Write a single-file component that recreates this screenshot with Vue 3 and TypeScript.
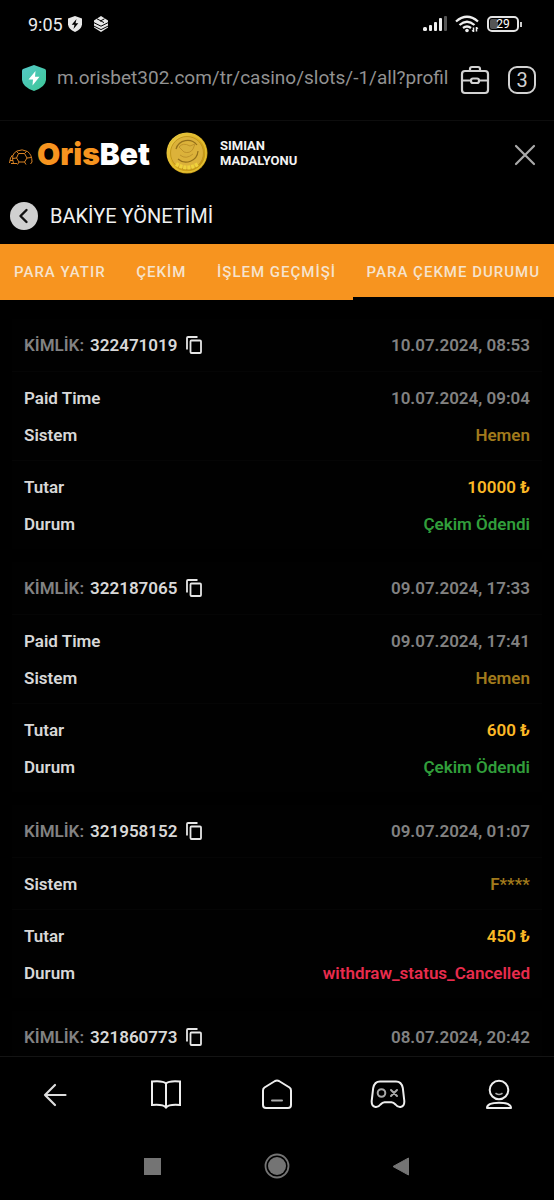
<script setup lang="ts">
import { ref } from 'vue'

interface Row {
  label: string
  value: string
  tone: string
}

interface Withdrawal {
  id: string
  date: string
  sections: Row[][]
}

const address = ref('m.orisbet302.com/tr/casino/slots/-1/all?profil')
const tabs = ['PARA YATIR', 'ÇEKİM', 'İŞLEM GEÇMİŞİ', 'PARA ÇEKME DURUMU']
const activeTab = ref(3)

const paid = (id: string, date: string, paidAt: string, amount: string): Withdrawal => ({
  id,
  date,
  sections: [
    [
      { label: 'Paid Time', value: paidAt, tone: 'muted' },
      { label: 'Sistem', value: 'Hemen', tone: 'system' },
    ],
    [
      { label: 'Tutar', value: amount, tone: 'amount' },
      { label: 'Durum', value: 'Çekim Ödendi', tone: 'success' },
    ],
  ],
})

const withdrawals: Withdrawal[] = [
  paid('322471019', '10.07.2024, 08:53', '10.07.2024, 09:04', '10000 ₺'),
  paid('322187065', '09.07.2024, 17:33', '09.07.2024, 17:41', '600 ₺'),
  {
    id: '321958152',
    date: '09.07.2024, 01:07',
    sections: [
      [{ label: 'Sistem', value: 'F****', tone: 'system' }],
      [
        { label: 'Tutar', value: '450 ₺', tone: 'amount' },
        { label: 'Durum', value: 'withdraw_status_Cancelled', tone: 'danger' },
      ],
    ],
  },
  { id: '321860773', date: '08.07.2024, 20:42', sections: [] },
]

const copyId = (id: string) => navigator.clipboard?.writeText(id)
</script>

<template>
  <div class="screen">
    <div class="status">
      <span class="clock">9:05</span>
      <svg class="status-shield" width="16" height="18" viewBox="0 0 16 18">
        <path d="M8 1 15 3.500V9.500Q14.500 14 8 17 1.500 14 1 9.500V3.500Z" fill="#e8e8e8" />
        <path d="M9.500 4 4.700 9.700H7.500L6.500 14 11.300 8.200H8.500Z" fill="#000" />
      </svg>
      <svg class="status-layers" width="16" height="16" viewBox="0 0 16 16">
        <path d="M8 0 15 4.500V11.500L8 16 1 11.500V4.500Z" fill="#e8e8e8" />
        <path d="M0 6.200 8 10.200 16 6.200M0 9.600 8 13.600 16 9.600M4 2.800 11 6.600M11.500 2.800 7 5.200" fill="none" stroke="#000" />
      </svg>
      <span class="spacer"></span>
      <svg width="25" height="18" viewBox="0 0 25 18" fill="#eee">
        <rect x="0" y="12" width="4" height="4" rx="1.500" />
        <rect x="6" y="10" width="3" height="6" rx="1" />
        <rect x="11" y="7" width="3" height="9" rx="1" />
        <rect x="16" y="3" width="3" height="13" rx="1" />
        <rect x="21" y="1" width="3" height="15" rx="1" fill="#555" />
      </svg>
      <svg class="wifi" width="25" height="18" viewBox="0 0 25 18" fill="none" stroke="#eee" stroke-width="2.300">
        <path d="M1 6.500Q12 -3 23 6.500" />
        <path d="M4.500 10Q12 3.500 19.500 10" />
        <path d="M8 13Q12 10 16 13" />
        <circle cx="12" cy="15.500" r="1.800" fill="#eee" stroke="none" />
        <path d="M18.500 12.500V17M21.500 12V16.500" stroke-width="1.500" />
        <path d="m17 15 1.500 2M23 14l-1.500-2" stroke-width="1" />
      </svg>
      <span class="battery"><span class="level"></span><span class="percent">29</span></span>
      <span class="battery-tip"></span>
    </div>

    <form class="address" @submit.prevent>
      <svg class="guard" width="26" height="28" viewBox="0 0 26 28">
        <defs>
          <linearGradient id="guardFill" x1="0" y1="0" x2="1" y2="1">
            <stop offset="0" stop-color="#55c9c9" />
            <stop offset="1" stop-color="#3cc795" />
          </linearGradient>
        </defs>
        <path d="M13 1 24 5Q25 5.500 25 7V16Q24.500 23 13 27 1.500 23 1 16V7Q1 5.500 2 5Z" fill="url(#guardFill)" />
        <path d="M14.500 7 7.500 15.500H12L11.500 21.500 18.500 12.800H14Z" fill="#fff" />
      </svg>
      <input v-model="address" class="url" type="text" aria-label="Adres" />
      <div class="tools">
        <button class="icon-button" type="button" aria-label="Araçlar">
          <svg width="30" height="30" viewBox="0 0 30 30" fill="none" stroke="#d2d2d2" stroke-width="2.200">
            <rect x="2" y="6" width="26" height="22" rx="3" />
            <path d="M10 6V4Q10 2 12 2H18Q20 2 20 4V6M2 15.500H11M19 15.500H28" />
            <rect x="11" y="13.500" width="8" height="4.500" rx="2" />
          </svg>
        </button>
        <button class="tab-count" type="button" aria-label="Açık sekmeler: 3">3</button>
      </div>
    </form>

    <header class="brand">
      <a class="logo" href="#" aria-label="OrisBet">
        <svg width="24" height="16" viewBox="0 0 24 16" fill="none" stroke="#d98324" stroke-width="1">
          <path d="M4.500 14.500Q1.500 5 8 2 13 -.500 18.500 2.500 23 5.500 23 13L21.500 15" />
          <path d="M9.500 4.500H15.500L18 9 15.500 13H10L7.500 9ZM9.500 4.500 7.500 2.500M15.500 4.500 17.500 2.500M18 9 22.500 8.500M15.500 13 17 15.500M10 13 8.500 15.500M7.500 9 3.500 9.500" />
          <path d="M.5 14Q1 8 3.500 6M1 11.500H4M2 14.500H8" />
        </svg>
        <span class="wordmark"><span class="oris">Oris</span>Bet</span>
      </a>
      <svg class="medal" width="42" height="42" viewBox="0 0 42 42">
        <defs>
          <linearGradient id="gold" x1="0" y1="0" x2="1" y2="1">
            <stop offset="0" stop-color="#f3d75b" />
            <stop offset=".5" stop-color="#d9ab1d" />
            <stop offset="1" stop-color="#b88a0d" />
          </linearGradient>
        </defs>
        <circle cx="21" cy="21" r="20.500" fill="url(#gold)" />
        <circle cx="21" cy="21" r="19" fill="none" stroke="#e3c034" stroke-width="1.500" />
        <circle cx="21" cy="21" r="16.500" fill="#dcb23a" stroke="#c2971c" />
        <path d="M10 17A12 12 0 0 1 31 13M32 19A12 12 0 0 1 12 27" fill="none" stroke="#94701a" stroke-width="1.200" />
        <path d="M13 15Q17 10 24 14L29 12 27 17Q24 22 18 20ZM14 23Q20 28 27 22" fill="#d9b13c" stroke="#c0932a" />
        <path d="M10 32Q21 39 32 32" fill="none" stroke="#efd23c" stroke-width="4" stroke-dasharray="3 1" />
      </svg>
      <p class="medal-name">SIMIAN<br />MADALYONU</p>
      <button class="icon-button close" type="button" aria-label="Kapat">
        <svg width="22" height="22" viewBox="0 0 22 22" stroke="#aaa" stroke-width="2.200" stroke-linecap="round">
          <path d="M2 2 20 20M20 2 2 20" />
        </svg>
      </button>
    </header>

    <div class="heading">
      <button class="back" type="button" aria-label="Geri">
        <svg width="12" height="16" viewBox="0 0 12 16" fill="none" stroke="#111" stroke-width="2.400" stroke-linecap="round" stroke-linejoin="round">
          <path d="M8.500 2 2.500 8 8.500 14" />
        </svg>
      </button>
      <h1>BAKİYE YÖNETİMİ</h1>
    </div>

    <nav class="tabs" aria-label="Bakiye yönetimi">
      <button
        v-for="(tab, index) in tabs"
        :key="tab"
        type="button"
        class="tab"
        :class="{ active: index === activeTab }"
        @click="activeTab = index"
      >{{ tab }}</button>
    </nav>

    <main class="list">
      <article v-for="item in withdrawals" :key="item.id" class="card">
        <div class="card-head">
          <span class="caption">KİMLİK:</span>
          <span class="number">{{ item.id }}</span>
          <button class="icon-button copy" type="button" aria-label="Kopyala" @click="copyId(item.id)">
            <svg width="16" height="18" viewBox="0 0 16 18" fill="none" stroke="#e6e6e6" stroke-width="1.800">
              <path d="M1 13.500V2Q1 1 2 1H11.500" />
              <rect x="4.500" y="4.500" width="10.500" height="12.500" rx="1" />
            </svg>
          </button>
          <time class="muted">{{ item.date }}</time>
        </div>
        <dl v-for="(section, s) in item.sections" :key="s" class="section">
          <div v-for="row in section" :key="row.label" class="row">
            <dt>{{ row.label }}</dt>
            <dd :class="row.tone">{{ row.value }}</dd>
          </div>
        </dl>
      </article>
    </main>

    <nav class="browser-nav" aria-label="Tarayıcı">
      <button type="button" aria-label="Geri">
        <svg width="36" height="36" viewBox="0 0 36 36" fill="none" stroke="#ddd" stroke-width="2.200" stroke-linecap="round" stroke-linejoin="round">
          <path d="M28.500 18H8M18 8 8 18 18 28" />
        </svg>
      </button>
      <button type="button" aria-label="Kitaplık">
        <svg width="36" height="36" viewBox="0 0 36 36" fill="none" stroke="#eee" stroke-width="2">
          <path d="M18 6.500Q15 3.500 4 4.500V28Q15 27 18 30.500 21 27 32 28V4.500Q21 3.500 18 6.500ZM18 6.500V30.500" />
        </svg>
      </button>
      <button type="button" aria-label="Ana sayfa">
        <svg width="36" height="36" viewBox="0 0 36 36" fill="none" stroke="#eee" stroke-width="2" stroke-linecap="round">
          <path d="M4 13.500Q4 11.500 5.500 10.500L16 4Q18 3 20 4L30.500 10.500Q32 11.500 32 13.500V28Q32 31 29 31H7Q4 31 4 28Z" />
          <path d="M13 23.500H23" stroke="#aaa" />
        </svg>
      </button>
      <button type="button" aria-label="Oyunlar">
        <svg width="36" height="36" viewBox="0 0 36 36" fill="none" stroke="#eee" stroke-width="2" stroke-linecap="round">
          <path d="M10 4.500H26Q31.500 4.500 32.800 11L34.200 23Q35 29 30.500 30 27.500 30.300 25.500 27.500 23.500 25.200 21.500 25.200H14.500Q12.500 25.200 10.500 27.500 8.500 30.300 5.500 30 1 29 1.800 23L3.200 11Q4.500 4.500 10 4.500Z" />
          <circle cx="11.500" cy="16" r="3.800" stroke="#aaa" />
          <path d="M21 13 27 19M27 13 21 19" stroke="#aaa" />
        </svg>
      </button>
      <button type="button" aria-label="Profil">
        <svg width="36" height="36" viewBox="0 0 36 36" fill="none" stroke="#eee" stroke-width="2" stroke-linecap="round" stroke-linejoin="round">
          <circle cx="18" cy="13" r="9.300" />
          <path d="M15 16.500Q18 18.500 21 16.500" stroke="#aaa" stroke-width="1.600" />
          <path d="M6 31Q6 25.700 18 25.700T30 31Z" />
        </svg>
      </button>
    </nav>

    <nav class="system-nav" aria-label="Sistem">
      <button type="button" aria-label="Son uygulamalar">
        <svg width="26" height="26" viewBox="0 0 26 26"><rect x="4" y="5" width="17" height="17" fill="#747474" /></svg>
      </button>
      <button type="button" aria-label="Ana ekran">
        <svg width="26" height="26" viewBox="0 0 26 26">
          <circle cx="13" cy="13" r="11.500" fill="none" stroke="#747474" stroke-width="1.800" />
          <circle cx="13" cy="13" r="9" fill="#747474" />
        </svg>
      </button>
      <button type="button" aria-label="Önceki">
        <svg width="26" height="26" viewBox="0 0 26 26">
          <path d="M20.500 5V22L5 13.500Z" fill="#747474" stroke="#747474" stroke-linejoin="round" />
        </svg>
      </button>
    </nav>
  </div>
</template>

<style>
body {
  margin: 0;
  background: #000;
}
</style>

<style scoped>
.screen {
  display: flex;
  flex-direction: column;
  height: 100vh;
  overflow: hidden;
  background: #000;
  color: #d8d8d8;
  font-family: Roboto, "Liberation Sans", sans-serif;
}

button {
  margin: 0;
  padding: 0;
  border: 0;
  background: none;
  color: inherit;
  font: inherit;
  cursor: pointer;
}

svg {
  display: block;
  flex: none;
}

.icon-button {
  display: grid;
  place-items: center;
}

.status {
  display: flex;
  flex: none;
  align-items: center;
  height: 48px;
  padding: 0 32px 0 28px;
}

.clock {
  color: #ececec;
  font-size: 18px;
}

.status-shield {
  margin-left: 4px;
}

.status-layers {
  margin-left: 10px;
}

.spacer {
  flex: 1;
}

.wifi {
  margin: 0 7px;
}

.battery {
  position: relative;
  display: grid;
  place-items: center;
  box-sizing: border-box;
  width: 32px;
  height: 16px;
  border: 2px solid #e4e4e4;
  border-radius: 5px;
}

.level {
  position: absolute;
  inset: 1px auto 1px 1px;
  width: 8px;
  border-radius: 2px;
  background: #555;
}

.percent {
  position: relative;
  color: #fff;
  font-size: 12px;
  line-height: 12px;
}

.battery-tip {
  width: 2px;
  height: 5px;
  margin-left: 1px;
  background: #ccc;
}

.address {
  display: flex;
  flex: none;
  align-items: center;
  height: 60px;
  padding: 0 18px 12px 21px;
  border-bottom: 1px solid #0d0d0d;
}

.url {
  flex: 1;
  min-width: 0;
  margin: 0 8px 0 10px;
  padding: 0;
  border: 0;
  outline: 0;
  background: none;
  color: #929292;
  font: 19px/28px Roboto, "Liberation Sans", sans-serif;
}

.tools {
  display: flex;
  align-items: center;
  gap: 18px;
  padding-top: 4px;
}

.tab-count {
  width: 28px;
  height: 28px;
  border: 2px solid #d2d2d2;
  border-radius: 9px;
  box-sizing: border-box;
  color: #d2d2d2;
  font-size: 20px;
  line-height: 24px;
}

.brand {
  display: flex;
  flex: none;
  align-items: center;
  height: 63px;
  padding: 0 18px 4px 9px;
}

.logo {
  display: flex;
  align-items: center;
  gap: 4px;
  color: #fff;
  text-decoration: none;
}

.logo svg {
  margin-top: 8px;
}

.wordmark {
  padding-top: 2px;
  font: 900 30px/32px Inter, "Open Sans", sans-serif;
}

.oris {
  color: #f7941f;
}

.medal {
  margin: 0 12px 0 16px;
}

.medal-name {
  margin: 0;
  color: #f2f2f2;
  font-size: 13px;
  font-weight: 700;
  line-height: 15px;
}

.close {
  margin-left: auto;
  padding-top: 4px;
}

.heading {
  display: flex;
  flex: none;
  align-items: center;
  gap: 12px;
  height: 56px;
  padding: 0 10px;
}

.back {
  display: grid;
  place-items: center;
  width: 28px;
  height: 28px;
  border-radius: 50%;
  background: #d0d0d0;
}

h1 {
  margin: 0;
  color: #f0f0f0;
  font-size: 20px;
  font-weight: 400;
  line-height: 28px;
}

.tabs {
  display: flex;
  flex: none;
  justify-content: space-between;
  height: 56px;
  background: #f7941f;
}

.tab {
  padding: 0 14px;
  border-top: 3px solid transparent;
  border-bottom: 3px solid transparent;
  color: #f6e3cd;
  font-size: 15px;
  font-weight: 500;
  letter-spacing: 1px;
  white-space: nowrap;
}

.tab.active {
  border-bottom-color: #000;
}

.list {
  display: flex;
  flex: 1;
  flex-direction: column;
  gap: 13px;
  min-height: 0;
  padding: 19px 12px 0;
  overflow-y: auto;
  scrollbar-width: none;
  font-size: 17px;
  font-weight: 600;
}

.card {
  flex: none;
  background: #010101;
}

.card-head {
  display: flex;
  align-items: center;
  height: 52px;
  padding: 0 12px;
}

.caption,
.muted {
  color: #828282;
}

.number {
  margin-left: 6px;
}

.copy {
  margin-left: 9px;
}

time {
  margin-left: auto;
}

.section {
  margin: 0;
  padding: 7px 12px;
  border-top: 1px solid #050505;
}

.row {
  display: flex;
  align-items: center;
  justify-content: space-between;
  height: 37px;
}

dd {
  margin: 0;
}

.system {
  color: #a17a1c;
}

.amount {
  color: #fcb926;
}

.success {
  color: #319e3b;
}

.danger {
  color: #e82c4d;
}

.browser-nav {
  display: grid;
  flex: none;
  grid-template-columns: repeat(5, 1fr);
  place-items: center;
  height: 75px;
  border-top: 1px solid #141414;
}

.system-nav {
  display: flex;
  flex: none;
  align-items: center;
  justify-content: center;
  gap: 98px;
  height: 68px;
}
</style>
